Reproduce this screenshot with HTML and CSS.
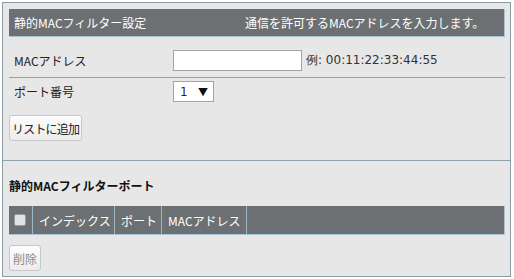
FILE: index.html
```html
<!DOCTYPE html>
<html lang="ja">
<head>
    <meta charset="UTF-8">
    <title>静的MACフィルター設定</title>
    <link rel="stylesheet" href="styles.css">
</head>
<body>
    <div class="panel">
        <div class="section">
            <div class="head">
                <span class="head-title">静的MACフィルター設定</span>
                <span class="head-note">通信を許可するMACアドレスを入力します。</span>
            </div>
            <div class="row row-mac">
                <div class="label">MACアドレス</div>
                <div class="field">
                    <input type="text" class="mac-input">
                    <span class="hint">例: 00:11:22:33:44:55</span>
                </div>
            </div>
            <div class="row row-port">
                <div class="label">ポート番号</div>
                <div class="field">
                    <div class="select"><span class="select-val">1</span><span class="arrow">▼</span></div>
                </div>
            </div>
            <button class="btn">リストに追加</button>
        </div>
        <div class="section section-list">
            <h3 class="list-title">静的MACフィルターポート</h3>
            <div class="thead">
                <div class="th th-check"><span class="check"></span></div>
                <div class="th th-index">インデックス</div>
                <div class="th th-port">ポート</div>
                <div class="th th-mac">MACアドレス</div>
            </div>
            <button class="btn btn-off" disabled>削除</button>
        </div>
    </div>
</body>
</html>
```

FILE: styles.css
```css
*{
    margin: 0;
    padding: 0;
    box-sizing: border-box;
}
body{
    background: #fff;
    font-family: "Noto Sans CJK JP", sans-serif;
    font-size: 12px;
    color: #222;
}
.panel{
    margin: 2px 0 0 2px;
    width: 509px;
    height: 275px;
    border: 1px solid #8b9ca5;
    background: #e7e7e7;
}
.section{
    padding: 6px 5px 0 6px;
    height: 158px;
    border-bottom: 1px solid #8fa2ac;
}
.head{
    display: flex;
    align-items: center;
    height: 28px;
    padding-left: 5px;
    background: #6c7073;
    color: #fff;
    border-bottom: 1px solid #a9c4d6;
    border-right: 1px solid #a9c4d6;
}
.head-title{
    width: 231px;
}
.row{
    display: flex;
    align-items: center;
}
.row-mac{
    height: 41px;
    padding-top: 7px;
    border-bottom: 1px solid #8fa2ac;
}
.row-port{
    height: 26px;
    padding-top: 1px;
}
.label{
    width: 164px;
    padding-left: 5px;
}
.field{
    display: flex;
    align-items: center;
}
.mac-input{
    width: 129px;
    height: 21px;
    border: 1px solid #a5a5a5;
    background: #fff;
    outline: 0;
}
.hint{
    margin-left: 4px;
    font-family: "DejaVu Sans", sans-serif;
    font-size: 12px;
    color: #333;
}
.select{
    display: flex;
    align-items: center;
    justify-content: space-between;
    width: 41px;
    height: 21px;
    padding: 0 5px 0 6px;
    border: 1px solid #a5a5a5;
    background: #fff;
}
.select-val{
    color: #2a1a7a;
    font-family: "DejaVu Sans", sans-serif;
}
.arrow{
    font-size: 10px;
    color: #111;
}
.btn{
    display: block;
    margin-top: 11px;
    height: 26px;
    padding: 0 2px;
    border: 1px solid #c8c8c8;
    border-radius: 3px;
    background: linear-gradient(#fdfdfd, #ececec);
    font-family: "Noto Sans CJK JP", sans-serif;
    font-size: 12px;
    letter-spacing: -0.8px;
    color: #222;
}
.section-list{
    height: auto;
    border-bottom: 0;
    padding-top: 15px;
}
.list-title{
    font-size: 12px;
    font-weight: bold;
    height: 20px;
    line-height: 20px;
    color: #111;
}
.thead{
    display: flex;
    margin-top: 10px;
    height: 29px;
    background: #6c7073;
    color: #fff;
    border-bottom: 1px solid #a9c4d6;
    border-right: 1px solid #a9c4d6;
}
.th{
    display: flex;
    align-items: center;
    padding-left: 6px;
    border-right: 1px solid #9db6c6;
}
.th-check{
    width: 24px;
    padding-left: 5px;
}
.check{
    width: 12px;
    height: 12px;
    background: #e2e2e2;
    border: 1px solid #9a9a9a;
    border-radius: 2px;
}
.th-index{
    width: 82px;
}
.th-port{
    width: 47px;
}
.th-mac{
    width: 85px;
}
.btn-off{
    width: 32px;
    margin-top: 10px;
    color: #8a8a8a;
    letter-spacing: 0;
    padding: 0;
}
```
